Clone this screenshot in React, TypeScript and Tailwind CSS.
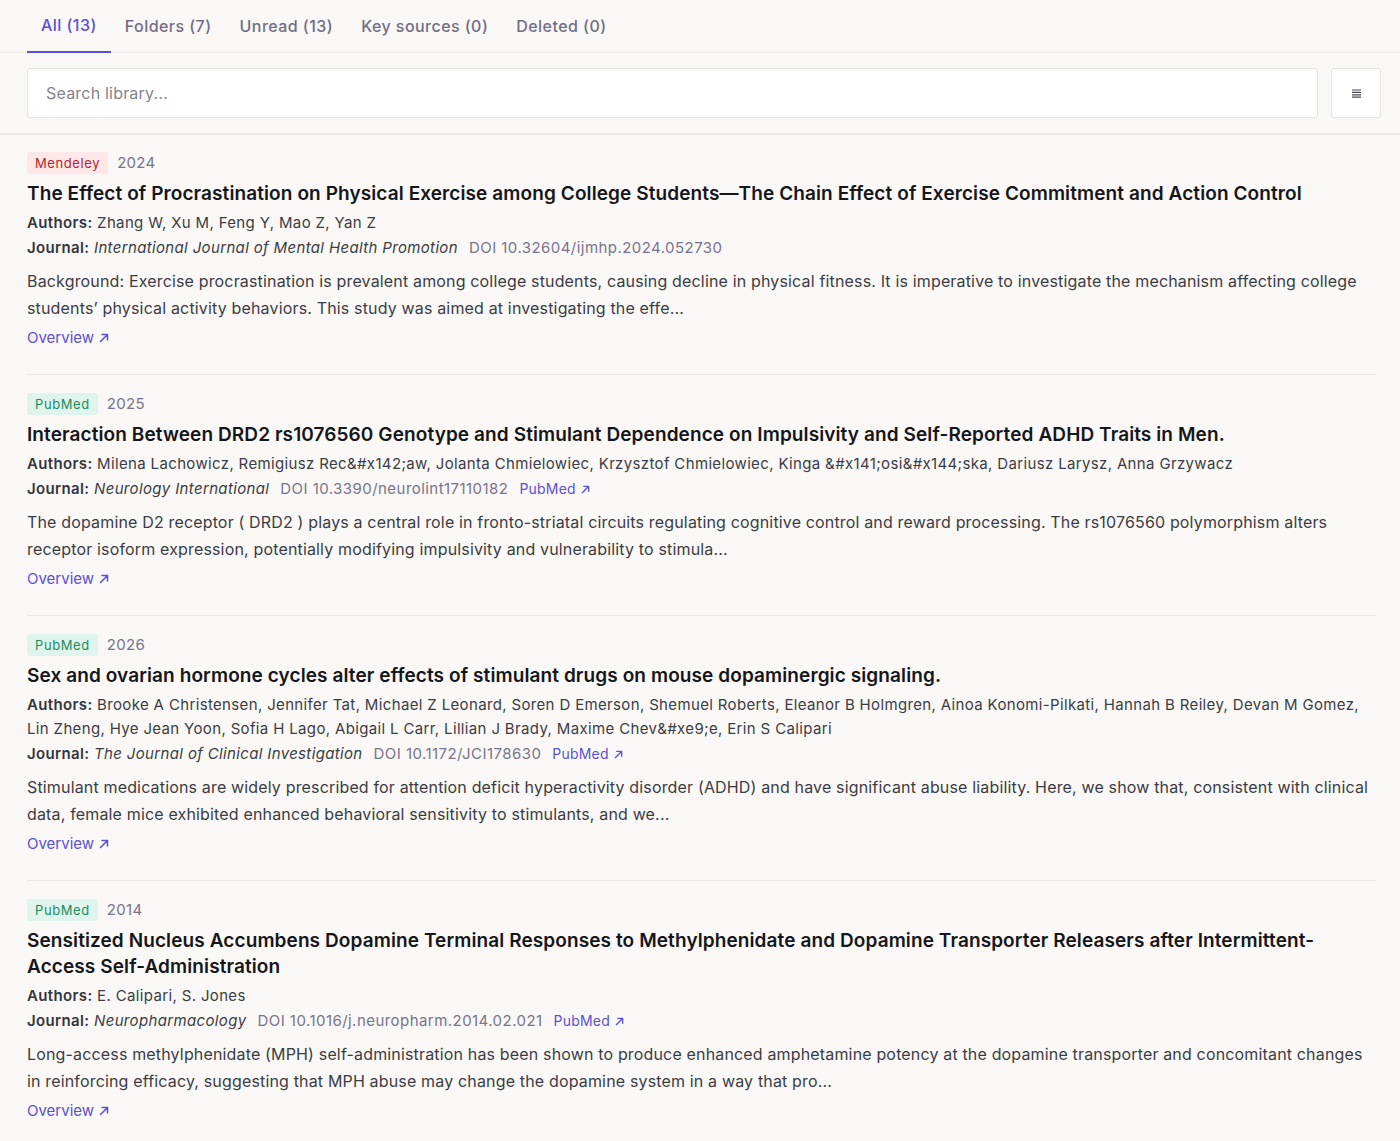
type Paper = {
    source: "Mendeley" | "PubMed"
    year: string
    title: string
    authors: string
    journal: string
    doi: string
    pubmed?: boolean
    abstract: string
}

const papers: Paper[] = [
    {
        source: "Mendeley",
        year: "2024",
        title: "The Effect of Procrastination on Physical Exercise among College Students—The Chain Effect of Exercise Commitment and Action Control",
        authors: "Zhang W, Xu M, Feng Y, Mao Z, Yan Z",
        journal: "International Journal of Mental Health Promotion",
        doi: "DOI 10.32604/ijmhp.2024.052730",
        abstract: "Background: Exercise procrastination is prevalent among college students, causing decline in physical fitness. It is imperative to investigate the mechanism affecting college students’ physical activity behaviors. This study was aimed at investigating the effe...",
    },
    {
        source: "PubMed",
        year: "2025",
        title: "Interaction Between DRD2 rs1076560 Genotype and Stimulant Dependence on Impulsivity and Self-Reported ADHD Traits in Men.",
        authors: "Milena Lachowicz, Remigiusz Rec&#x142;aw, Jolanta Chmielowiec, Krzysztof Chmielowiec, Kinga &#x141;osi&#x144;ska, Dariusz Larysz, Anna Grzywacz",
        journal: "Neurology International",
        doi: "DOI 10.3390/neurolint17110182",
        pubmed: true,
        abstract: "The dopamine D2 receptor ( DRD2 ) plays a central role in fronto-striatal circuits regulating cognitive control and reward processing. The rs1076560 polymorphism alters receptor isoform expression, potentially modifying impulsivity and vulnerability to stimula...",
    },
    {
        source: "PubMed",
        year: "2026",
        title: "Sex and ovarian hormone cycles alter effects of stimulant drugs on mouse dopaminergic signaling.",
        authors: "Brooke A Christensen, Jennifer Tat, Michael Z Leonard, Soren D Emerson, Shemuel Roberts, Eleanor B Holmgren, Ainoa Konomi-Pilkati, Hannah B Reiley, Devan M Gomez, Lin Zheng, Hye Jean Yoon, Sofia H Lago, Abigail L Carr, Lillian J Brady, Maxime Chev&#xe9;e, Erin S Calipari",
        journal: "The Journal of Clinical Investigation",
        doi: "DOI 10.1172/JCI178630",
        pubmed: true,
        abstract: "Stimulant medications are widely prescribed for attention deficit hyperactivity disorder (ADHD) and have significant abuse liability. Here, we show that, consistent with clinical data, female mice exhibited enhanced behavioral sensitivity to stimulants, and we...",
    },
    {
        source: "PubMed",
        year: "2014",
        title: "Sensitized Nucleus Accumbens Dopamine Terminal Responses to Methylphenidate and Dopamine Transporter Releasers after Intermittent-Access Self-Administration",
        authors: "E. Calipari, S. Jones",
        journal: "Neuropharmacology",
        doi: "DOI 10.1016/j.neuropharm.2014.02.021",
        pubmed: true,
        abstract: "Long-access methylphenidate (MPH) self-administration has been shown to produce enhanced amphetamine potency at the dopamine transporter and concomitant changes in reinforcing efficacy, suggesting that MPH abuse may change the dopamine system in a way that pro...",
    },
]

const tabs = ["All (13)", "Folders (7)", "Unread (13)", "Key sources (0)", "Deleted (0)"]

// little ↗ used after external links
const ExtArrow = ({ size = 10 }: { size?: number }) => (
    <svg width={size} height={size} viewBox="0 0 10 10" fill="none" stroke="currentColor" strokeWidth="1.5" strokeLinecap="round" strokeLinejoin="round">
        <path d="M1.5 8.5 8.3 1.7M3 1.5h5.5V7" />
    </svg>
)

function PaperCard({ paper, first, last }: { paper: Paper; first: boolean; last: boolean }) {
    return (
        <div className={(first ? "pt-[17px] " : "pt-[18px] ") + (last ? "pb-[25px]" : "pb-[25px] border-b border-[#ebe9e6]")}>
            <div className="flex items-center gap-[9px]">
                {paper.source === "Mendeley" ? (
                    <span className="h-[22px] px-2 flex items-center rounded-[3px] bg-[#fde7e7] text-[#b4232f] text-[13px] tracking-[0.6px]">Mendeley</span>
                ) : (
                    <span className="h-[22px] px-2 flex items-center rounded-[3px] bg-[#dff4ec] text-[#1c8c5e] text-[13px] tracking-[0.6px]">PubMed</span>
                )}
                <span className="text-[15px] tracking-[0.3px] text-[#78748c]">{paper.year}</span>
            </div>
            <h3 className="mt-[6.5px] text-[19px] leading-[26px] tracking-[0.1px] font-semibold text-[#16161a]">{paper.title}</h3>
            <p className="mt-1 text-[15px] leading-6 tracking-[0.35px] text-[#3c3c44]">
                <span className="font-semibold text-[#35353d]">Authors:</span> {paper.authors}
            </p>
            <p className="mt-px text-[15px] leading-6 tracking-[0.35px] text-[#3c3c44]">
                <span className="font-semibold text-[#35353d]">Journal:</span> <i>{paper.journal}</i>
                <span className="ml-[11px] text-[#78748c] tracking-[0.45px]">{paper.doi}</span>
                {paper.pubmed && (
                    <a className="ml-[11px] text-[14px] tracking-[0.2px] text-[#5b4fd6] inline-flex items-center gap-[5px]">
                        PubMed <ExtArrow size={9} />
                    </a>
                )}
            </p>
            <p className="mt-[8px] text-[16px] leading-[27px] tracking-[0.16px] text-[#3c3c44]">{paper.abstract}</p>
            <a className="mt-[5px] text-[15px] leading-[22px] text-[#5b4fd6] inline-flex items-center gap-[5px]">
                Overview <ExtArrow />
            </a>
        </div>
    )
}

export default function App() {
    return (
        <div className="min-h-[1141px] bg-[#f9f8f6] font-['Inter',sans-serif]">
            <nav className="h-[53px] flex px-[27px] border-b border-[#ebe9e6]">
                {tabs.map((t, i) => (
                    <a
                        key={t}
                        className={
                            i === 0
                                ? "h-[53px] pb-px px-[14px] flex items-center text-[16px] tracking-[0.45px] font-medium text-[#5b4fd6] border-b-2 border-[#5b4fd6] -mb-px"
                                : "h-[53px] pb-px px-[14px] flex items-center text-[16px] tracking-[0.45px] font-medium text-[#716d86]"
                        }
                    >
                        {t}
                    </a>
                ))}
            </nav>
            <div className="flex gap-[13px] pl-[27px] pr-[19px] pt-[15px] pb-[15px] border-b-2 border-[#ebe9e6]">
                <input
                    className="flex-1 h-[50px] bg-white border border-[#e6e4e1] rounded-[3px] pl-[18px] text-[16px] tracking-[0.2px] text-[#333] placeholder:text-[#85838e] outline-none"
                    placeholder="Search library..."
                />
                <button className="w-[50px] h-[50px] bg-white border border-[#e6e4e1] rounded-[3px] flex items-center justify-center">
                    <svg width="9" height="9" viewBox="0 0 9 9" fill="none" stroke="#4a4a52" strokeWidth="1.2">
                        <path d="M0 1h9M0 3.4h9M0 5.8h9M0 8.2h9" />
                    </svg>
                </button>
            </div>
            <div className="pl-[27px] pr-[24px]">
                {papers.map((p, i) => (
                    <PaperCard key={p.title} paper={p} first={i === 0} last={i === papers.length - 1} />
                ))}
            </div>
        </div>
    )
}
